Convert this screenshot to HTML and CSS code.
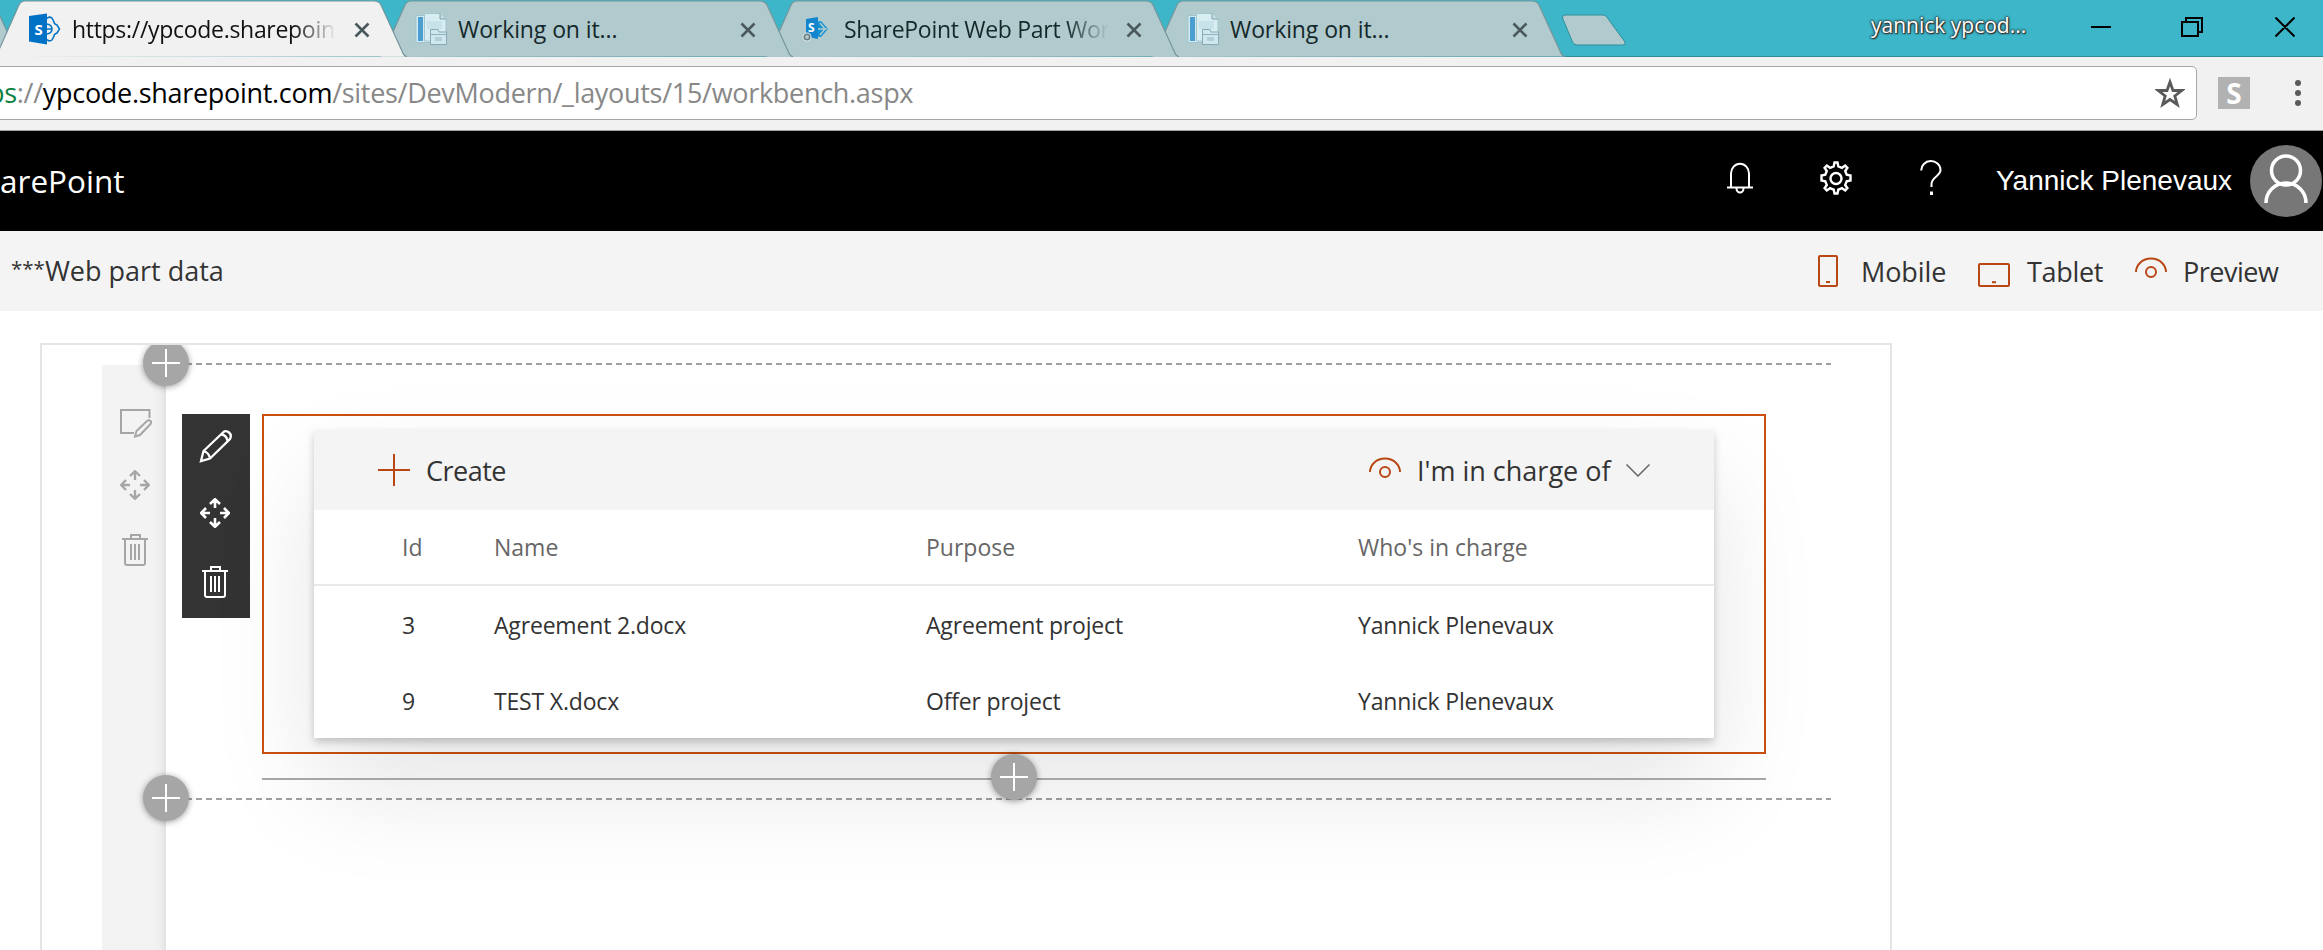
FILE: index.html
```html
<!DOCTYPE html>
<html lang="en">
<head>
<meta charset="utf-8">
<title>SharePoint Workbench</title>
<link rel="stylesheet" href="styles.css">
</head>
<body>
<svg class="defs" width="0" height="0" aria-hidden="true">
  <defs>
    <symbol id="tab-shape" viewBox="0 0 413 57">
      <path d="M0 57 Q3 55 4.500 51 L25 5 Q27 1 31 1 H380 Q385 1 387 5 L408 51 Q410 56.500 413 56.500"/>
    </symbol>
    <symbol id="close" viewBox="0 0 16 16"><path d="M1.500 1.500 14.500 14.500M14.500 1.500 1.500 14.500" stroke-width="2.600"/></symbol>
    <symbol id="doc" viewBox="0 0 32 32">
      <path d="M1 2.500H18V29.500H1Z" fill="#d3eaf0" stroke="#9fc4d0"/>
      <path d="M3 4H8V28H3Z" fill="#4a9fd0"/>
      <path d="M9.500 0.500H25L31 6V28H9.500Z" fill="#d7edf1" stroke="#a3c6cf"/>
      <path d="M25 0.500V6H31" fill="#c4dde3" stroke="#7fa3ad"/>
      <path d="M12 8H27V16H12Z" fill="#c8e2ea"/>
      <path d="M15.500 19V16.500H23L24 19H31.500V31.500H15.500Z" fill="#cfe7ed" stroke="#86a9b3"/>
      <path d="M15.500 21.500H31.500" stroke="#8fb3bd"/>
      <path d="M20 24H27V28H20Z" fill="#b3d0d8"/>
    </symbol>
    <symbol id="plus" viewBox="0 0 32 32"><path d="M16 0V32M0 16H32"/></symbol>
    <symbol id="eye" viewBox="0 0 32 24"><path d="M1 16A15 13.500 0 0 1 31 16"/><circle cx="16" cy="16" r="5"/></symbol>
    <symbol id="move" viewBox="0 0 30 30">
      <path d="M15 10V1.500M10 6 15 1.200 20 6M15 20V28.500M10 24 15 28.800 20 24M10 15H1.500M6 10 1.200 15 6 20M20 15H28.500M24 10 28.800 15 24 20"/>
    </symbol>
    <symbol id="trash" viewBox="0 0 26 32">
      <path d="M0 5H26M9 5V1H18V5M3 5V29Q3 31 5 31H21Q23 31 23 29V5M9 10V26M13 10V26M17 10V26"/>
    </symbol>
  </defs>
</svg>

<header class="tabs">
  <div class="tab tab-prev"><svg class="tab-bg"><use href="#tab-shape"/></svg></div>
  <div class="tab tab-active">
    <svg class="tab-bg"><use href="#tab-shape"/></svg>
    <svg class="favicon" viewBox="0 0 32 32">
      <path d="M18 5.500Q20 3 23 5L25 9Q25 11 28 12L30.500 16 28 20Q25 21 25 23L23 27Q20 29 18 26.500M18 11Q23 12 23 16T18 21M18 16H23" fill="none" stroke="#0072c6" stroke-width="1.500"/>
      <path d="M0 3 18 0.500V31.500L0 28.500Z" fill="#0072c6"/>
      <text x="5.500" y="21.500" class="favicon-letter">S</text>
    </svg>
    <span class="tab-title tab-title-fade">https://ypcode.sharepoin</span>
    <svg class="tab-close"><use href="#close"/></svg>
  </div>
  <div class="tab tab-b">
    <svg class="tab-bg"><use href="#tab-shape"/></svg>
    <svg class="favicon"><use href="#doc"/></svg>
    <span class="tab-title">Working on it...</span>
    <svg class="tab-close"><use href="#close"/></svg>
  </div>
  <div class="tab tab-c">
    <svg class="tab-bg"><use href="#tab-shape"/></svg>
    <svg class="favicon" viewBox="0 0 32 32">
      <path d="M15 9 20 8 27 16 20 24 15 23Z" fill="#1290d0"/>
      <path d="M16 16H26M19 10 24 16 19 22" stroke="#b1cacd" stroke-width="1.600" fill="none"/>
      <path d="M5 6 17 4V26L5 23.500Z" fill="#1285cc"/>
      <text x="7" y="19" class="favicon-letter favicon-letter-small">S</text>
      <circle cx="6" cy="24" r="4.500" fill="#dfe9ea"/>
      <circle cx="6" cy="24" r="2.700" fill="#b1cacd" stroke="#6a7f82" stroke-width="1.600"/>
    </svg>
    <span class="tab-title tab-title-fade">SharePoint Web Part Wor</span>
    <svg class="tab-close"><use href="#close"/></svg>
  </div>
  <div class="tab tab-d">
    <svg class="tab-bg"><use href="#tab-shape"/></svg>
    <svg class="favicon"><use href="#doc"/></svg>
    <span class="tab-title">Working on it...</span>
    <svg class="tab-close"><use href="#close"/></svg>
  </div>
  <svg class="new-tab" viewBox="0 0 66 34"><path d="M4 1H42Q45 1 46.500 4L64 28Q65 31 62 31H16Q13 31 11.500 28L1.500 4Q1 1 4 1Z"/></svg>
  <span class="profile">yannick ypcod...</span>
  <svg class="win-controls" viewBox="0 0 204 20">
    <path d="M0 10H20M91 5H107V19H91ZM95 5V1H111V15H107M184.500 0.500 203.500 19.500M203.500 0.500 184.500 19.500"/>
  </svg>
</header>

<div class="address-bar">
  <div class="omnibox">
    <div class="url"><span class="url-scheme">ps</span><span class="url-path">://</span><span class="url-host">ypcode.sharepoint.com</span><span class="url-path">/sites/DevModern/_layouts/15/workbench.aspx</span></div>
    <svg class="star" viewBox="0 0 30 30"><path d="M15 4 18 12.500 26.700 12.500 19.800 18 22.300 26.500 15 21.500 7.700 26.500 10.200 18 3.300 12.500 12 12.500Z"/></svg>
  </div>
  <div class="extension">S</div>
  <svg class="menu" viewBox="0 0 6 26"><circle cx="3" cy="3" r="3"/><circle cx="3" cy="13" r="3"/><circle cx="3" cy="23" r="3"/></svg>
</div>

<div class="suite-bar">
  <span class="suite-name">arePoint</span>
  <svg class="bell" viewBox="0 0 28 32"><path d="M5 25V11.500A8.800 9.500 0 0 1 23 11.500V25M1 25.500H27M10.500 26.500A3.500 4 0 0 0 17.500 26.500"/></svg>
  <svg class="gear" viewBox="0 0 36 36"><path d="M15.700 5.300 16.500 1.500h3l.8 3.800 3.700 1.500 3.200-2.200 2.200 2.200-2.200 3.200 1.500 3.700 3.800.8v5l-3.800.8-1.500 3.700 2.200 3.200-2.200 2.200-3.200-2.200-3.700 1.500-.8 3.800h-3l-.8-3.800-3.700-1.500-3.200 2.200-2.200-2.200 2.200-3.200-1.500-3.700-3.800-.8v-5l3.800-.8 1.500-3.700-2.200-3.200 2.200-2.200 3.200 2.200Z"/><circle cx="18" cy="17.500" r="5.500"/></svg>
  <svg class="help" viewBox="0 0 22 36"><path d="M1.200 10.500A9.500 9 0 0 1 20.500 10C20.500 16 11.500 17 11.500 24V27"/><path d="M11.500 31.500V35" stroke-width="3"/></svg>
  <span class="user-name">Yannick Plenevaux</span>
  <svg class="avatar" viewBox="0 0 72 72"><circle class="avatar-disc" cx="36" cy="36" r="36"/><path d="M16 58A20 20 0 0 1 56 58" /><circle cx="36" cy="25.500" r="14.500"/></svg>
</div>

<div class="command-bar">
  <span class="command-data"><span class="stars">***</span>Web part data</span>
  <svg class="icon-mobile" viewBox="0 0 22 34"><rect x="2" y="2" width="18" height="30" rx="1"/><path d="M9 28H13"/></svg>
  <span class="command-mobile">Mobile</span>
  <svg class="icon-tablet" viewBox="0 0 32 24"><rect x="1" y="1" width="30" height="22" rx="1"/><path d="M14 19.200H18"/></svg>
  <span class="command-tablet">Tablet</span>
  <svg class="icon-eye command-eye"><use href="#eye"/></svg>
  <span class="command-preview">Preview</span>
</div>

<main class="canvas">
  <div class="zone">
    <aside class="zone-rail">
      <svg class="rail-edit" viewBox="0 0 32 30"><path d="M14 24H1V1H29.500V9M15 27.500 16.500 22 27 12Q29 10.500 30.500 12T30.500 15L20 26Z"/></svg>
      <svg class="rail-move"><use href="#move"/></svg>
      <svg class="rail-trash"><use href="#trash"/></svg>
    </aside>
    <section class="zone-body">
      <div class="dashed"></div>
      <div class="zone-row">
        <div class="part-tools">
          <svg class="tool-pencil" viewBox="0 0 34 34"><path d="M2 32 4.500 22 24.500 3Q27 1 30 3.500T31 10L11 29.500ZM4.500 22Q10 23.500 11 29.500M22.500 5.500Q27.500 6 28.500 12"/></svg>
          <svg class="tool-move"><use href="#move"/></svg>
          <svg class="tool-trash"><use href="#trash"/></svg>
        </div>
        <div class="part-column">
          <div class="webpart">
            <div class="card">
              <div class="card-bar">
                <svg class="card-plus"><use href="#plus"/></svg>
                <span class="card-create">Create</span>
                <svg class="icon-eye card-eye"><use href="#eye"/></svg>
                <span class="card-filter">I'm in charge of</span>
                <svg class="chevron" viewBox="0 0 24 13"><path d="M.500 .500 12 12 23.500 .500"/></svg>
              </div>
              <div class="row row-head"><span>Id</span><span>Name</span><span>Purpose</span><span>Who's in charge</span></div>
              <div class="row"><span>3</span><span>Agreement 2.docx</span><span>Agreement project</span><span>Yannick Plenevaux</span></div>
              <div class="row"><span>9</span><span>TEST X.docx</span><span>Offer project</span><span>Yannick Plenevaux</span></div>
            </div>
          </div>
          <div class="insert-line"><svg class="add add-mid" viewBox="0 0 46 46"><path d="M23 9V37M9 23H37"/></svg></div>
        </div>
      </div>
      <div class="dashed"></div>
      <svg class="add add-top" viewBox="0 0 46 46"><path d="M23 9V37M9 23H37"/></svg>
      <svg class="add add-bottom" viewBox="0 0 46 46"><path d="M23 9V37M9 23H37"/></svg>
    </section>
  </div>
</main>
</body>
</html>
```

FILE: styles.css
```css
* { box-sizing: border-box; }
body {
  margin: 0;
  width: 2323px;
  height: 950px;
  overflow: hidden;
  background: #fff;
  color: #333;
  font-family: "Open Sans", "Noto Sans", sans-serif;
  font-size: 27px;
  white-space: nowrap;
}
svg { display: block; flex: none; fill: none; }
span { flex: none; }
.defs { position: absolute; }

/* Browser tabs */
.tabs {
  display: flex;
  height: 57px;
  background: #3cb6c8;
  border-bottom: 1px solid #2f8d9c;
  position: relative;
}
.tab {
  flex: none;
  display: flex;
  align-items: center;
  position: relative;
  width: 413px;
  height: 57px;
  margin-right: -27px;
  padding: 0 0 0 35px;
  color: #14282b;
}
.tab-prev { margin-left: -392px; z-index: 4; }
.tab-active { z-index: 5; color: #111; }
.tab-b { z-index: 3; }
.tab-c { z-index: 2; }
.tab-d { z-index: 1; }
.tab-bg {
  position: absolute;
  left: 0;
  top: 0;
  width: 413px;
  height: 57px;
  fill: #b1cacd;
  stroke: #76969c;
  stroke-width: 1.2;
}
.tab-active .tab-bg { fill: #f1f1f1; }
.favicon { position: relative; width: 32px; height: 32px; margin-top: 1px; }
.favicon-letter { font: bold 15px "Open Sans", sans-serif; fill: #fff; }
.favicon-letter-small { font-size: 12px; }
.tab-title {
  position: relative;
  width: 270px;
  margin: 0 12px 0 11px;
  font-size: 23px;
  line-height: 34px;
  letter-spacing: -0.1px;
}
.tab-title-fade {
  letter-spacing: -0.3px;
  -webkit-mask-image: linear-gradient(to right, #000 82%, transparent 98%);
  mask-image: linear-gradient(to right, #000 82%, transparent 98%);
}
.tab-close { position: relative; width: 16px; height: 16px; margin-top: 2px; stroke: #4a5a5c; }
.new-tab { width: 66px; height: 34px; margin: 14px 0 0 23px; fill: #b1cacd; stroke: #2f8d9c; }
.profile {
  width: 180px;
  margin: 10px 0 0 244px;
  font-size: 21px;
  line-height: 30px;
  color: #fff;
  text-shadow: 0 0 2px #333, 0 0 2px #333, 0 0 3px #333, 1px 1px 1px #333;
}
.win-controls { width: 204px; height: 20px; margin: 17px 0 0 40px; stroke: #000; stroke-width: 2; }

/* Address bar */
.address-bar {
  display: flex;
  height: 74px;
  padding-top: 9px;
  background: #f1f1f1;
  border-bottom: 1px solid #a0a0a0;
}
.omnibox {
  flex: none;
  display: flex;
  align-items: center;
  justify-content: space-between;
  width: 2202px;
  height: 54px;
  margin-left: -5px;
  padding-right: 11px;
  background: #fff;
  border: 1px solid #a6a6a6;
  border-radius: 5px;
}
.url { margin: -1px 0 0 -8px; color: #888; letter-spacing: -0.3px; }
.url-scheme { color: #0b8043; }
.url-host { color: #000; }
.star { width: 30px; height: 30px; stroke: #5a5a5a; stroke-width: 2.800; }
.extension {
  width: 32px;
  height: 32px;
  margin: 11px 0 0 21px;
  background: #b2b2b2;
  color: #fff;
  font-size: 28px;
  font-weight: 700;
  line-height: 32px;
  text-align: center;
}
.menu { width: 6px; height: 26px; margin: 14px 0 0 45px; fill: #5a5a5a; }

/* Suite bar */
.suite-bar { display: flex; height: 100px; background: #000; color: #fff; stroke: #fff; stroke-width: 2; }
.suite-name { width: 1726px; font-size: 31.500px; line-height: 99px; letter-spacing: 0; }
.bell { width: 28px; height: 32px; margin-top: 31px; }
.gear { width: 36px; height: 36px; margin: 30px 0 0 64px; stroke-width: 2.400; }
.help { width: 22px; height: 36px; margin: 29px 0 0 66px; }
.user-name { width: 254px; margin-left: 54px; font: 28px/99px "Liberation Sans", Arial, sans-serif; }
.avatar { width: 72px; height: 72px; margin-top: 14px; stroke-width: 3.500; }
.avatar-disc { fill: #777; stroke: none; }

/* Command bar */
.command-bar { display: flex; align-items: center; height: 80px; padding-left: 11px; background: #f4f4f4; letter-spacing: -0.300px; }
.command-bar svg, .icon-eye, .card-plus { stroke: #b94714; stroke-width: 2; }
.command-data { width: 1806px; line-height: 38px; letter-spacing: 0; }
.stars { font-size: 20.500px; line-height: 20px; vertical-align: 5px; }
.icon-mobile { width: 22px; height: 34px; }
.command-mobile { width: 114px; margin-left: 22px; letter-spacing: -0.1px; }
.icon-tablet { width: 32px; height: 24px; margin: 8px 0 0 3px; }
.command-tablet { width: 104px; margin-left: 17px; }
.icon-eye { width: 32px; height: 24px; }
.command-eye { margin: -6px 0 0 4px; }
.command-preview { margin-left: 16px; letter-spacing: -0.500px; }

/* Page canvas */
.canvas {
  width: 1852px;
  height: 620px;
  margin: 32px 0 0 40px;
  border: 2px solid #e5e5e5;
  overflow: hidden;
}
.zone { display: flex; padding: 18px 0 0 60px; height: 100%; }
.zone-rail {
  display: flex;
  flex-direction: column;
  align-items: center;
  width: 64px;
  margin-top: 2px;
  padding-top: 44px;
  background: linear-gradient(to right, #f3f3f3 78%, #efefef 90%, #e2e2e2);
  stroke: #a6a6a6;
  stroke-width: 2;
}
.rail-edit { width: 32px; height: 30px; margin-left: 4px; }
.rail-move { width: 30px; height: 30px; margin: 31px 0 0 2px; stroke-width: 2.400; }
.rail-trash { width: 26px; height: 32px; margin: 34px 0 0 2px; }
.zone-body { position: relative; width: 1665px; }
.dashed { height: 2px; background: repeating-linear-gradient(to right, #a0a0a0 0 6px, transparent 6px 10px); }
.zone-row { display: flex; height: 433px; padding: 49px 0 0 16px; }
.part-tools {
  flex: none;
  display: flex;
  flex-direction: column;
  align-items: center;
  width: 68px;
  height: 204px;
  margin-right: 12px;
  padding-top: 15px;
  background: #333;
  stroke: #fff;
  stroke-width: 2.300;
}
.tool-pencil { width: 34px; height: 34px; }
.tool-move { width: 30px; height: 30px; margin: 35px 2px 0 0; stroke-width: 2.600; }
.tool-trash { width: 26px; height: 32px; margin: 38px 2px 0 0; stroke-width: 2; }
.part-column { width: 1504px; }
.webpart { height: 340px; padding: 14px 50px; border: 2px solid #ca5010; }
.card {
  height: 308px;
  background: #fff;
  box-shadow: 0 4px 8px rgba(0, 0, 0, 0.2), 0 50px 100px rgba(0, 0, 0, 0.1);
}
.card-bar { display: flex; align-items: center; height: 80px; padding-left: 64px; background: #f4f4f4; }
.card-plus { width: 32px; height: 32px; }
.card-create { width: 943px; margin-left: 16px; letter-spacing: -0.5px; }
.card-eye { margin-top: -4px; }
.card-filter { width: 209px; margin-left: 16px; }
.chevron { width: 24px; height: 13px; stroke: #666; stroke-width: 1.500; }
.row {
  display: grid;
  grid-template-columns: 92px 432px 432px 1fr;
  height: 76px;
  padding-left: 88px;
  font-size: 23px;
  line-height: 78px;
  letter-spacing: -0.18px;
}
.row-head { line-height: 75px; color: #666; border-bottom: 2px solid #eaeaea; letter-spacing: 0; }
.insert-line { position: relative; height: 2px; margin-top: 24px; background: #a6a6a6; }
.add {
  position: absolute;
  width: 46px;
  height: 46px;
  border-radius: 50%;
  background: #a6a6a6;
  box-shadow: 0 1px 6px rgba(0, 0, 0, 0.4);
  stroke: #fff;
  stroke-width: 2;
}
.add-mid { left: 729px; top: -24px; }
.add-top { left: -23px; top: -23px; }
.add-bottom { left: -23px; top: 412px; }
```
